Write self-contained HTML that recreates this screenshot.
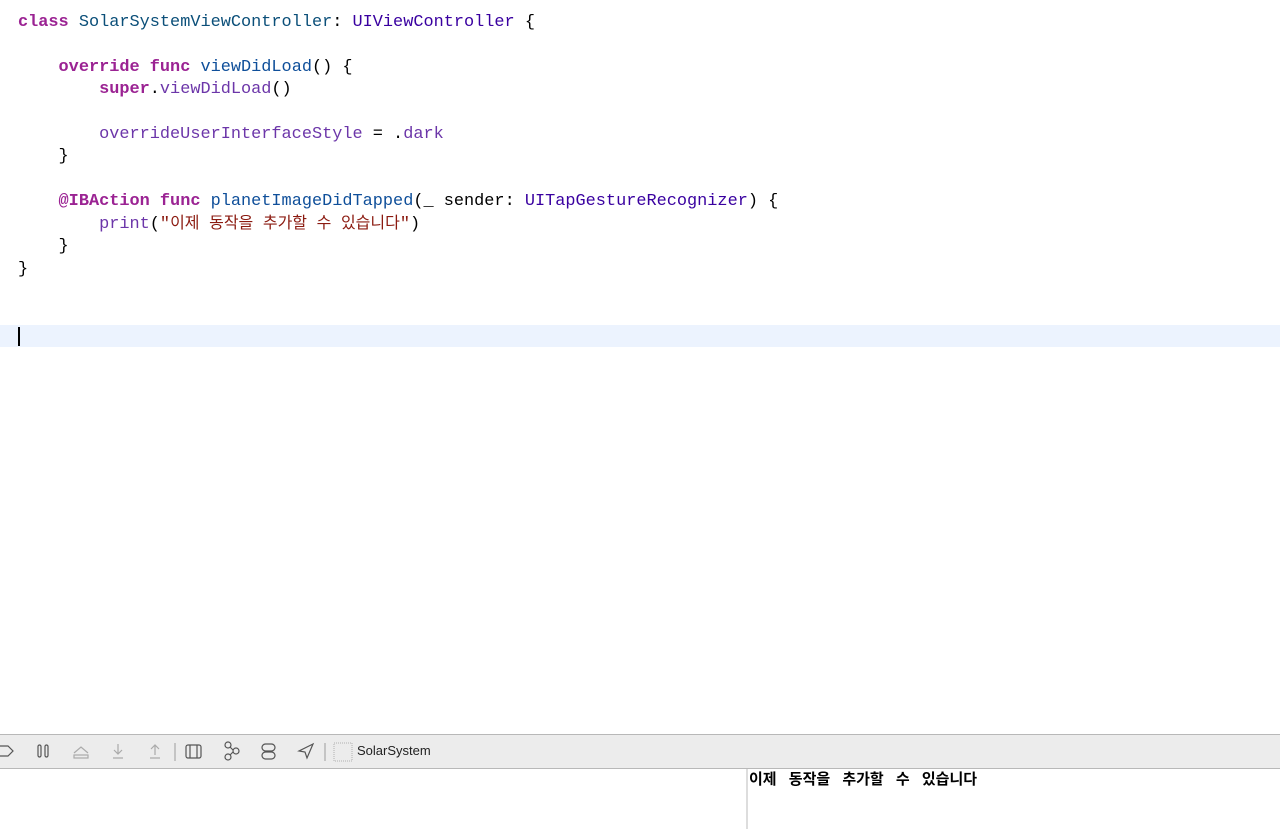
<!DOCTYPE html>
<html><head><meta charset="utf-8"><style>
html,body{margin:0;padding:0;background:#fff;width:1280px;height:829px;overflow:hidden;position:relative}
#code{position:absolute;left:18px;top:12px;font-family:"Liberation Mono","Noto Sans CJK KR",monospace;font-size:16.9px;line-height:22.35px;color:#000;white-space:pre}
.k{color:#9b2393;font-weight:bold}
.t{color:#0b4f79}
.u{color:#3900a0}
.f{color:#0f4f9a}
.p{color:#6c36a9}
.s{color:#8b1a10}
.h{font-size:16px;letter-spacing:0}
#hl{position:absolute;left:0;top:325px;width:1280px;height:22px;background:#ecf3fe}
#cur{position:absolute;left:18px;top:327px;width:1.5px;height:19px;background:#000}
#bar{position:absolute;left:0;top:734px;width:1280px;height:33px;background:#ececec;border-top:1px solid #b8b8b8;border-bottom:1px solid #b8b8b8}
#bar svg{position:absolute;top:0}
#lbl{position:absolute;left:357px;top:743px;font-family:"Liberation Sans",sans-serif;font-size:13px;color:#222}
#div{position:absolute;left:746px;top:769px;width:2px;height:60px;background:#ddd}
#out{position:absolute;left:749px;top:768px;font-family:"Liberation Sans","Noto Sans CJK KR",sans-serif;font-weight:bold;font-size:15px;word-spacing:8px;color:#000}
</style></head><body>
<div id="hl"></div><div id="cur"></div>
<div id="code"><span class="k">class</span> <span class="t">SolarSystemViewController</span>: <span class="u">UIViewController</span> {

    <span class="k">override</span> <span class="k">func</span> <span class="f">viewDidLoad</span>() {
        <span class="k">super</span>.<span class="p">viewDidLoad</span>()

        <span class="p">overrideUserInterfaceStyle</span> = .<span class="p">dark</span>
    }

    <span class="k">@IBAction</span> <span class="k">func</span> <span class="f">planetImageDidTapped</span>(_ sender: <span class="u">UITapGestureRecognizer</span>) {
        <span class="p">print</span>(<span class="s">"<span class="h">이제 동작을 추가할 수 있습니다</span>"</span>)
    }
}</div>
<div id="bar">
<svg width="480" height="33" viewBox="0 0 480 33" fill="none" stroke="#555" stroke-width="1.2">
<path d="M-2 11H8l5 5-5 5H-2"/>
<rect x="38" y="10" width="3" height="12" rx="1.5"/><rect x="45" y="10" width="3" height="12" rx="1.5"/>
<g stroke="#aaa"><path d="M74 18l7-6 7 6"/><rect x="74" y="20" width="14" height="3"/>
<path d="M118 9v10M114 15l4 4 4-4M113 23h10"/>
<path d="M155 20V10M151 14l4-4 4 4M150 23h10"/></g>
<path d="M175 8v18" stroke="#aaa"/>
<rect x="186" y="10" width="15" height="13" rx="2"/><path d="M190 10v13M197 10v13"/>
<circle cx="228" cy="10" r="3"/><circle cx="236" cy="16" r="3"/><circle cx="228" cy="22" r="3"/><path d="M230 12l3 3M230 20l3-3"/>
<rect x="262" y="9" width="13" height="7" rx="3.5"/><rect x="262" y="17" width="13" height="7" rx="3.5"/>
<path d="M313 9l-14 7 6 1 2 6z"/>
<path d="M325 8v18" stroke="#aaa"/>
<rect x="334" y="8" width="18" height="18" stroke="#bbb" stroke-dasharray="1 1"/>
</svg>
</div>
<div id="lbl">SolarSystem</div>
<div id="div"></div>
<div id="out">이제 동작을 추가할 수 있습니다</div>
</body></html>
